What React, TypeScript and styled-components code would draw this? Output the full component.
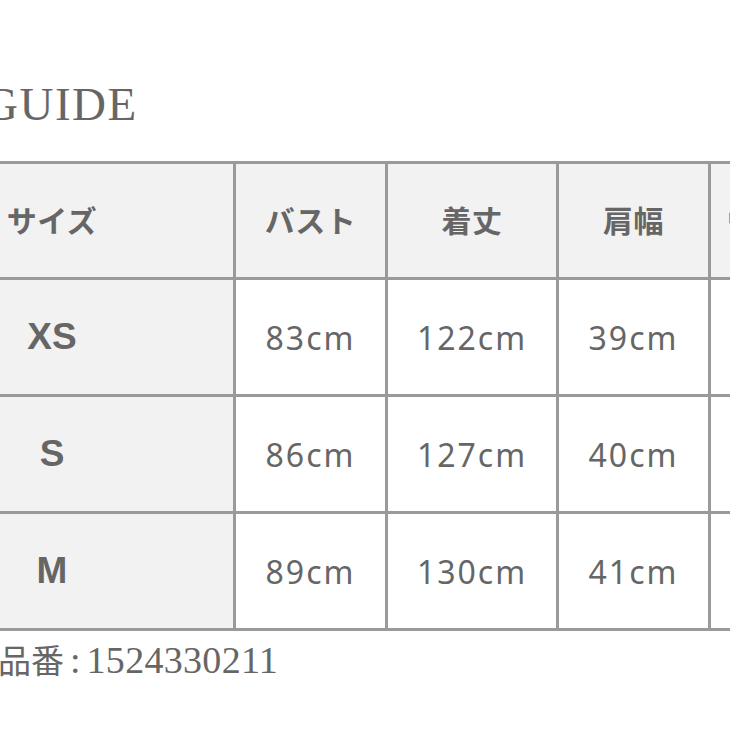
import styled, { createGlobalStyle } from "styled-components";

const GlobalStyle = createGlobalStyle`
  html, body {
    margin: 0;
    padding: 0;
    background: #ffffff;
    overflow: hidden;
  }
  #root {
    width: 730px;
    height: 730px;
    overflow: hidden;
  }
`;

const LINE = "#9a9a9a";
const TEXT = "#666666";

const sizes = [
  { size: "XS", bust: "83cm", length: "122cm", shoulder: "39cm" },
  { size: "S", bust: "86cm", length: "127cm", shoulder: "40cm" },
  { size: "M", bust: "89cm", length: "130cm", shoulder: "41cm" },
];

const Page = styled.div`
  display: flex;
  flex-direction: column;
  width: 730px;
  height: 730px;
  overflow: hidden;
`;

const Title = styled.h1`
  margin: 81px 0 0 -16px;
  height: 47px;
  font-family: "Liberation Serif", "Noto Sans CJK JP", serif;
  font-weight: 400;
  font-size: 47px;
  line-height: 47px;
  color: ${TEXT};
  letter-spacing: 1.5px;
  white-space: nowrap;
`;

const Table = styled.div`
  margin: 33px 0 0 -132px;
  display: grid;
  grid-template-columns: 362px 149px 168px 149px 152px;
  grid-template-rows: 113px 114px 114px 114px;
  gap: 3px;
  padding: 3px;
  width: max-content;
  background: ${LINE};
`;

const Cell = styled.div<{ $shaded?: boolean }>`
  display: flex;
  align-items: center;
  justify-content: center;
  background: ${({ $shaded }) => ($shaded ? "#f2f2f2" : "#ffffff")};
  color: ${TEXT};
  white-space: nowrap;
  overflow: hidden;
`;

const HeadText = styled.span`
  font-family: "Noto Sans CJK JP", "Noto Sans", sans-serif;
  font-weight: 700;
  font-size: 30px;
  letter-spacing: 0.5px;
  transform: translateY(-2px);
`;

const SizeText = styled.span`
  font-family: "Liberation Sans", Arial, sans-serif;
  font-weight: 700;
  font-size: 37px;
`;

const ValueText = styled.span`
  font-family: "Noto Sans", "Noto Sans CJK JP", sans-serif;
  font-weight: 400;
  font-size: 32px;
  letter-spacing: 2px;
`;

const ItemNumber = styled.p`
  margin: 8px 0 0 -2px;
  display: flex;
  align-items: baseline;
  height: 40px;
  line-height: 40px;
  color: ${TEXT};
  white-space: nowrap;
`;

const ItemLabel = styled.span`
  font-family: "Noto Sans CJK JP", sans-serif;
  font-weight: 400;
  font-size: 33px;
`;

const ItemColon = styled.span`
  margin: 0 6px 0 6px;
  font-family: "Liberation Serif", serif;
  font-size: 38px;
`;

const ItemCode = styled.span`
  font-family: "Liberation Serif", serif;
  font-size: 38px;
  letter-spacing: 0.3px;
`;

export default function App() {
  return (
    <>
      <GlobalStyle />
      <Page>
        <Title>GUIDE</Title>
        <Table>
          <Cell $shaded>
            <HeadText>サイズ</HeadText>
          </Cell>
          <Cell $shaded>
            <HeadText>バスト</HeadText>
          </Cell>
          <Cell $shaded>
            <HeadText>着丈</HeadText>
          </Cell>
          <Cell $shaded>
            <HeadText>肩幅</HeadText>
          </Cell>
          <Cell $shaded>
            <HeadText>ウエスト</HeadText>
          </Cell>
          {sizes.map((row) => (
            <>
              <Cell $shaded key={row.size}>
                <SizeText>{row.size}</SizeText>
              </Cell>
              <Cell>
                <ValueText>{row.bust}</ValueText>
              </Cell>
              <Cell>
                <ValueText>{row.length}</ValueText>
              </Cell>
              <Cell>
                <ValueText>{row.shoulder}</ValueText>
              </Cell>
              <Cell />
            </>
          ))}
        </Table>
        <ItemNumber>
          <ItemLabel>品番</ItemLabel>
          <ItemColon>:</ItemColon>
          <ItemCode>1524330211</ItemCode>
        </ItemNumber>
      </Page>
    </>
  );
}
